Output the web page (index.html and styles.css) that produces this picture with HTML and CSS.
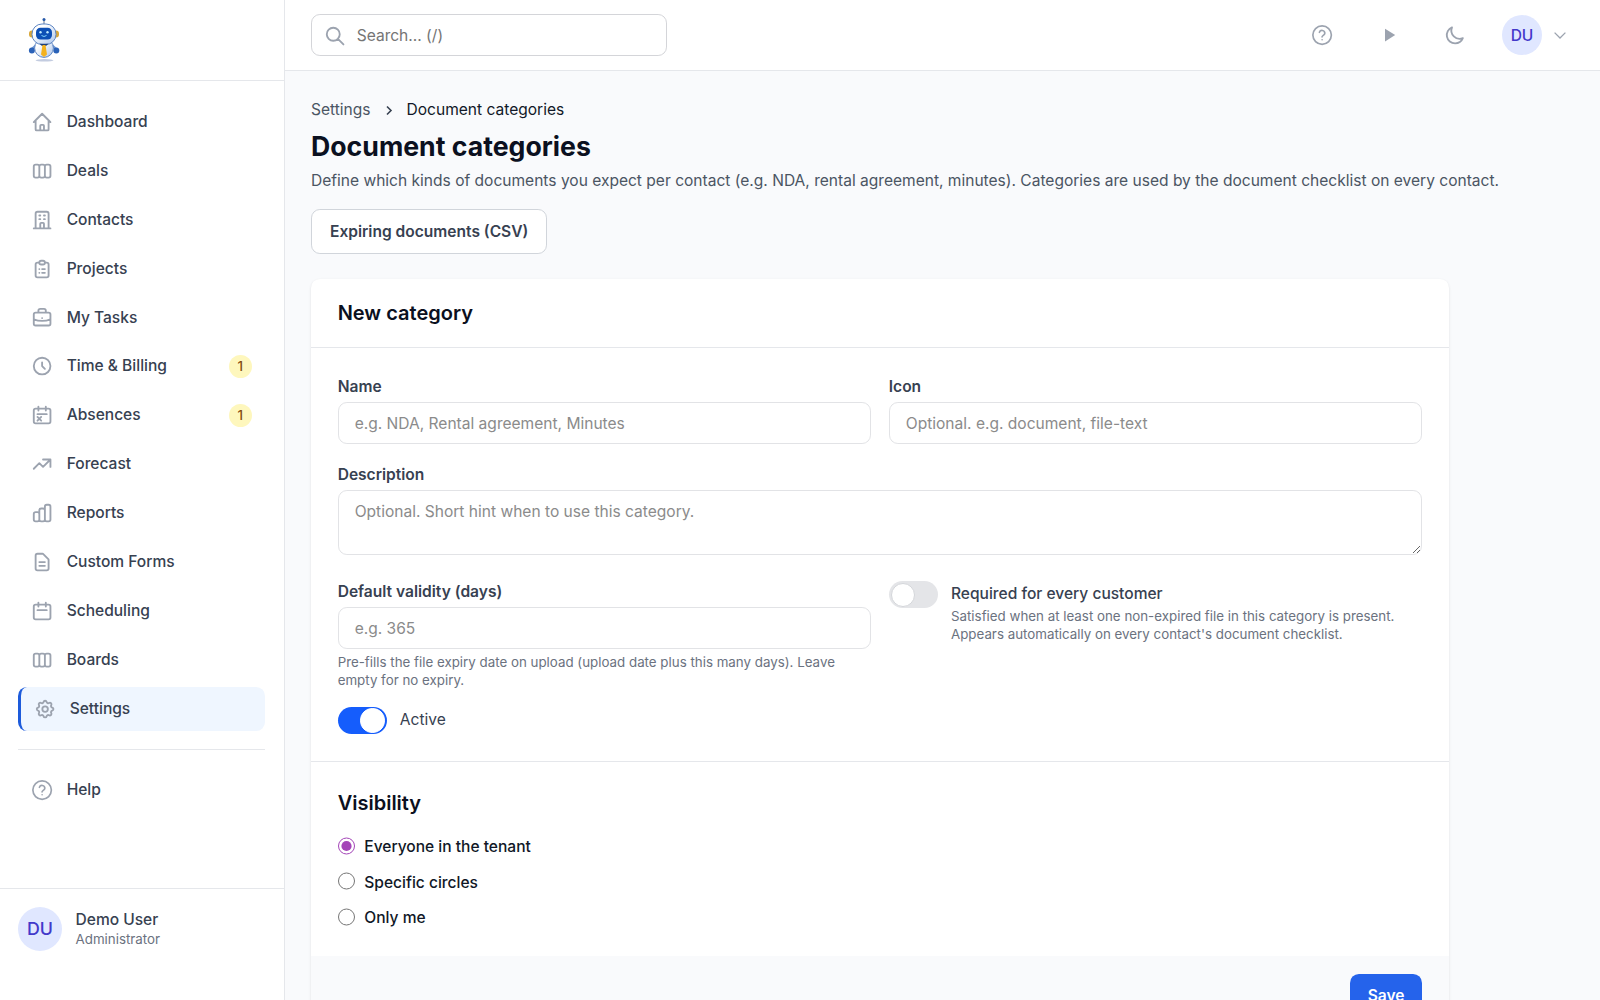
FILE: index.html
```html
<!DOCTYPE html>
<html lang="en">
<head>
    <meta charset="UTF-8">
    <meta name="viewport" content="width=device-width, initial-scale=1.0">
    <title>Document categories</title>
    <link rel="stylesheet" href="styles.css">
</head>
<body>
    <aside class="sidebar">
        <div class="logo">
            <svg viewBox="0 0 32 46" class="robot">
                <defs>
                    <linearGradient id="shell" x1="0" y1="0" x2="1" y2="1">
                        <stop offset="0.3" stop-color="#ffffff"/>
                        <stop offset="1" stop-color="#a9c3ea"/>
                    </linearGradient>
                </defs>
                <ellipse cx="16.500" cy="43.300" rx="9" ry="1.300" fill="#c3cce0"/>
                <path d="M16 7V3" stroke="#64748b" stroke-width="1"/>
                <circle cx="16" cy="2.500" r="1.500" fill="#2457a8"/>
                <rect x="1" y="13.500" width="6" height="7" rx="3" fill="#d9a83a"/>
                <rect x="25" y="13.500" width="6" height="7" rx="3" fill="#d9a83a"/>
                <path d="M8 28.500L4 32M24 28.500l4 3.500" stroke="#6f97d4" stroke-width="2.400"/>
                <circle cx="3.900" cy="33.500" r="3" fill="#2a62b8"/>
                <circle cx="28.300" cy="33.500" r="3" fill="#2a62b8"/>
                <circle cx="16" cy="31" r="9.400" fill="url(#shell)" stroke="#5f87c4" stroke-width="1"/>
                <rect x="4" y="7" width="24" height="20.500" rx="10" fill="url(#shell)" stroke="#5f87c4" stroke-width="1"/>
                <rect x="8" y="10.800" width="16" height="11.800" rx="4.500" fill="#0d4fb5"/>
                <circle cx="12.500" cy="15.300" r="1.200" fill="#bfeaff"/>
                <circle cx="19.500" cy="15.300" r="1.200" fill="#bfeaff"/>
                <path d="M13.500 18.500q2.500 2 5 0" stroke="#7fd4ff" fill="none"/>
                <path d="M11.500 26.800h9l-2.500 2.200h-4z" fill="#1d3f7c"/>
                <path d="M14.500 28h3l1.500 9.500-3 2.500-3-2.500z" fill="#f3b11d"/>
            </svg>
        </div>
        <nav class="nav">
            <a class="nav-item"><svg viewBox="0 0 24 24" class="icon"><path d="M3 12l2-2m0 0l7-7 7 7M5 10v10a1 1 0 001 1h3m10-11l2 2m-2-2v10a1 1 0 01-1 1h-3m-6 0a1 1 0 001-1v-4a1 1 0 011-1h2a1 1 0 011 1v4a1 1 0 001 1m-6 0h6"/></svg><span>Dashboard</span></a>
            <a class="nav-item"><svg viewBox="0 0 24 24" class="icon"><path d="M9 17V7m0 10a2 2 0 01-2 2H5a2 2 0 01-2-2V7a2 2 0 012-2h2a2 2 0 012 2m0 10a2 2 0 002 2h2a2 2 0 002-2M9 7a2 2 0 012-2h2a2 2 0 012 2m0 10V7m0 10a2 2 0 002 2h2a2 2 0 002-2V7a2 2 0 00-2-2h-2a2 2 0 00-2 2"/></svg><span>Deals</span></a>
            <a class="nav-item"><svg viewBox="0 0 24 24" class="icon"><path d="M19 21V5a2 2 0 00-2-2H7a2 2 0 00-2 2v16m14 0h2m-2 0h-5m-9 0H3m2 0h5M9 7h1m-1 4h1m4-4h1m-1 4h1m-5 10v-5a1 1 0 011-1h2a1 1 0 011 1v5m-4 0h4"/></svg><span>Contacts</span></a>
            <a class="nav-item"><svg viewBox="0 0 24 24" class="icon"><path d="M9 5H7a2 2 0 00-2 2v12a2 2 0 002 2h10a2 2 0 002-2V7a2 2 0 00-2-2h-2M9 5a2 2 0 002 2h2a2 2 0 002-2M9 5a2 2 0 012-2h2a2 2 0 012 2m-3 7h3m-3 4h3m-6-4h.01M9 16h.01"/></svg><span>Projects</span></a>
            <a class="nav-item"><svg viewBox="0 0 24 24" class="icon"><path d="M21 13.255A23.931 23.931 0 0112 15c-3.183 0-6.22-.62-9-1.745M16 6V4a2 2 0 00-2-2h-4a2 2 0 00-2 2v2m4 6h.01M5 20h14a2 2 0 002-2V8a2 2 0 00-2-2H5a2 2 0 00-2 2v10a2 2 0 002 2z"/></svg><span>My Tasks</span></a>
            <a class="nav-item"><svg viewBox="0 0 24 24" class="icon"><path d="M12 8v4l3 3m6-3a9 9 0 11-18 0 9 9 0 0118 0z"/></svg><span>Time &amp; Billing</span><span class="badge">1</span></a>
            <a class="nav-item"><svg viewBox="0 0 24 24" class="icon"><path d="M8 7V3m8 4V3m-9 8h10M5 21h14a2 2 0 002-2V7a2 2 0 00-2-2H5a2 2 0 00-2 2v12a2 2 0 002 2zM7 14l4 4m0-4l-4 4"/></svg><span>Absences</span><span class="badge">1</span></a>
            <a class="nav-item"><svg viewBox="0 0 24 24" class="icon"><path d="M13 7h8m0 0v8m0-8l-8 8-4-4-6 6"/></svg><span>Forecast</span></a>
            <a class="nav-item"><svg viewBox="0 0 24 24" class="icon"><path d="M9 19v-6a2 2 0 00-2-2H5a2 2 0 00-2 2v6a2 2 0 002 2h2a2 2 0 002-2zm0 0V9a2 2 0 012-2h2a2 2 0 012 2v10m-6 0a2 2 0 002 2h2a2 2 0 002-2m0 0V5a2 2 0 012-2h2a2 2 0 012 2v14a2 2 0 01-2 2h-2a2 2 0 01-2-2z"/></svg><span>Reports</span></a>
            <a class="nav-item"><svg viewBox="0 0 24 24" class="icon"><path d="M9 12h6m-6 4h6m2 5H7a2 2 0 01-2-2V5a2 2 0 012-2h5.586a1 1 0 01.707.293l5.414 5.414a1 1 0 01.293.707V19a2 2 0 01-2 2z"/></svg><span>Custom Forms</span></a>
            <a class="nav-item"><svg viewBox="0 0 24 24" class="icon"><path d="M8 7V3m8 4V3m-9 8h10M5 21h14a2 2 0 002-2V7a2 2 0 00-2-2H5a2 2 0 00-2 2v12a2 2 0 002 2z"/></svg><span>Scheduling</span></a>
            <a class="nav-item"><svg viewBox="0 0 24 24" class="icon"><path d="M9 17V7m0 10a2 2 0 01-2 2H5a2 2 0 01-2-2V7a2 2 0 012-2h2a2 2 0 012 2m0 10a2 2 0 002 2h2a2 2 0 002-2M9 7a2 2 0 012-2h2a2 2 0 012 2m0 10V7m0 10a2 2 0 002 2h2a2 2 0 002-2V7a2 2 0 00-2-2h-2a2 2 0 00-2 2"/></svg><span>Boards</span></a>
            <a class="nav-item active"><svg viewBox="0 0 24 24" class="icon"><path d="M10.325 4.317c.426-1.756 2.924-1.756 3.35 0a1.724 1.724 0 002.573 1.066c1.543-.94 3.31.826 2.37 2.37a1.724 1.724 0 001.065 2.572c1.756.426 1.756 2.924 0 3.35a1.724 1.724 0 00-1.066 2.573c.94 1.543-.826 3.31-2.37 2.37a1.724 1.724 0 00-2.572 1.065c-.426 1.756-2.924 1.756-3.35 0a1.724 1.724 0 00-2.573-1.066c-1.543.94-3.31-.826-2.37-2.37a1.724 1.724 0 00-1.065-2.572c-1.756-.426-1.756-2.924 0-3.35a1.724 1.724 0 001.066-2.573c-.94-1.543.826-3.31 2.37-2.37.996.608 2.296.07 2.572-1.065z"/><path d="M15 12a3 3 0 11-6 0 3 3 0 016 0z"/></svg><span>Settings</span></a>
            <hr class="nav-divider">
            <a class="nav-item"><svg viewBox="0 0 24 24" class="icon thin"><circle cx="12" cy="12" r="10"/><path d="M9.090 9a3 3 0 015.830 1c0 2-3 2.500-3 4M12 17h.01"/></svg><span>Help</span></a>
        </nav>
        <div class="user">
            <div class="avatar large">DU</div>
            <div>
                <div class="user-name">Demo User</div>
                <div class="user-role">Administrator</div>
            </div>
        </div>
    </aside>

    <div class="page">
        <header class="topbar">
            <label class="search">
                <svg viewBox="0 0 24 24" class="icon"><path d="M21 21l-6-6m2-5a7 7 0 11-14 0 7 7 0 0114 0z"/></svg>
                <input type="text" placeholder="Search... (/)">
            </label>
            <div class="actions">
                <svg viewBox="0 0 24 24" class="icon thin"><circle cx="12" cy="12" r="10"/><path d="M9.090 9a3 3 0 015.830 1c0 2-3 2.500-3 4M12 17h.01"/></svg>
                <svg viewBox="0 0 24 24" class="icon play"><path d="M6.500 5l11 7-11 7z"/></svg>
                <svg viewBox="0 0 24 24" class="icon moon"><path d="M20.354 15.354A9 9 0 018.646 3.646 9.003 9.003 0 0012 21a9.003 9.003 0 008.354-5.646z"/></svg>
                <div class="avatar">DU</div>
                <svg viewBox="0 0 12 7" class="chevron"><path d="M.6.600L6 6 11.400.6"/></svg>
            </div>
        </header>

        <main class="content">
            <div class="breadcrumb">
                <span class="parent">Settings</span>
                <svg viewBox="0 0 6 9" class="separator"><path d="M1 .5l4 4-4 4"/></svg>
                <span>Document categories</span>
            </div>
            <h1>Document categories</h1>
            <p class="intro">Define which kinds of documents you expect per contact (e.g. NDA, rental agreement, minutes). Categories are used by the document checklist on every contact.</p>
            <button class="btn btn-outline">Expiring documents (CSV)</button>

            <form class="card">
                <div class="card-header"><h2>New category</h2></div>
                <div class="card-body">
                    <div class="field">
                        <label for="name">Name</label>
                        <input id="name" type="text" placeholder="e.g. NDA, Rental agreement, Minutes">
                    </div>
                    <div class="field">
                        <label for="icon">Icon</label>
                        <input id="icon" type="text" placeholder="Optional. e.g. document, file-text">
                    </div>
                    <div class="field wide">
                        <label for="description">Description</label>
                        <textarea id="description" placeholder="Optional. Short hint when to use this category."></textarea>
                    </div>
                    <div class="field">
                        <label for="validity">Default validity (days)</label>
                        <input id="validity" type="text" placeholder="e.g. 365">
                        <p class="hint">Pre-fills the file expiry date on upload (upload date plus this many days). Leave empty for no expiry.</p>
                    </div>
                    <div class="toggle-row required">
                        <span class="toggle"></span>
                        <div>
                            <div class="toggle-title">Required for every customer</div>
                            <p class="hint">Satisfied when at least one non-expired file in this category is present. Appears automatically on every contact's document checklist.</p>
                        </div>
                    </div>
                    <div class="toggle-row wide centered">
                        <span class="toggle on"></span>
                        <span>Active</span>
                    </div>
                </div>
                <div class="card-section">
                    <h2>Visibility</h2>
                    <label class="radio"><input type="radio" name="visibility" checked><span>Everyone in the tenant</span></label>
                    <label class="radio"><input type="radio" name="visibility"><span>Specific circles</span></label>
                    <label class="radio"><input type="radio" name="visibility"><span>Only me</span></label>
                </div>
                <div class="card-footer">
                    <button type="button" class="btn btn-primary">Save</button>
                </div>
            </form>
        </main>
    </div>
</body>
</html>
```

FILE: styles.css
```css
* {
    box-sizing: border-box;
}
html {
    font-size: 17.778px;
}
body {
    margin: 0;
    height: 100vh;
    display: flex;
    overflow: hidden;
    font-family: Inter, "Liberation Sans", sans-serif;
    font-size: 0.875rem;
    line-height: 1.25rem;
    color: #111827;
    background-color: #f9fafc;
}
h1, h2, p {
    margin: 0;
}
input, textarea, button {
    font: inherit;
}
.icon {
    width: 1.25rem;
    height: 1.25rem;
    flex-shrink: 0;
    fill: none;
    stroke: #9ca3af;
    stroke-width: 2;
    stroke-linecap: round;
    stroke-linejoin: round;
}
.icon.thin {
    stroke-width: 1.8;
}

/* Sidebar */
.sidebar {
    width: 285px;
    flex-shrink: 0;
    display: flex;
    flex-direction: column;
    background-color: #fff;
    border-right: 1px solid #e5e7eb;
}
.logo {
    height: 81px;
    padding: 17px 0 0 28px;
    border-bottom: 1px solid #e5e7eb;
}
.robot {
    display: block;
    width: 32px;
    height: 46px;
}
.nav {
    flex: 1;
    display: flex;
    flex-direction: column;
    gap: 0.25rem;
    padding: 19px 19px 1rem 1rem;
}
.nav-item {
    display: flex;
    align-items: center;
    gap: 0.75rem;
    height: 2.5rem;
    padding: 0 0.75rem;
    border-radius: 0.5rem;
    font-weight: 500;
    color: #374151;
}
.nav-item.active {
    border-left: 3.5px solid #1d5bdb;
    background-color: #eff6ff;
}
.badge {
    margin-left: auto;
    padding: 0.125rem 0.48rem;
    border-radius: 1rem;
    font-size: 0.75rem;
    line-height: 1rem;
    color: #854d0e;
    background-color: #fef7bd;
}
.nav-divider {
    width: 100%;
    margin: 0.75rem 0;
    border: 0;
    border-top: 1px solid #e5e7eb;
}
.user {
    height: 112px;
    display: flex;
    align-items: flex-start;
    gap: 0.75rem;
    padding: 1rem;
    border-top: 1px solid #e5e7eb;
}
.user-name {
    margin-top: 2.5px;
    font-weight: 500;
    line-height: 1.25rem;
    color: #374151;
}
.user-role {
    font-size: 0.75rem;
    line-height: 1rem;
    color: #6b7280;
}
.avatar {
    width: 2.25rem;
    height: 2.25rem;
    display: flex;
    align-items: center;
    justify-content: center;
    padding-top: 1px;
    border-radius: 50%;
    font-weight: 500;
    color: #4338ca;
    background-color: #e0e7ff;
}
.avatar.large {
    width: 2.5rem;
    height: 2.5rem;
    font-size: 1rem;
}

/* Top bar */
.page {
    flex: 1;
    min-width: 0;
}
.topbar {
    height: 4rem;
    display: flex;
    align-items: center;
    justify-content: space-between;
    padding: 0.5px 34px 0 26px;
    background-color: #fff;
    border-bottom: 1px solid #e5e7eb;
}
.search {
    width: 20rem;
    height: 42px;
    display: flex;
    align-items: center;
    gap: 10.5px;
    padding: 1px 0.75rem 0 12px;
    border: 1px solid #d4d5d9;
    border-radius: 0.5rem;
}
.search input {
    flex: 1;
    min-width: 0;
    padding: 0.5px 0 0;
    border: 0;
    outline: 0;
}
.search input::placeholder {
    color: #757575;
}
.actions {
    display: flex;
    align-items: center;
}
.play {
    margin-left: 45px;
    fill: #9ca3af;
    stroke: none;
}
.moon {
    margin-left: 43px;
}
.actions .avatar {
    margin-left: 36px;
}
.chevron {
    width: 12px;
    height: 7px;
    margin-left: 12px;
    fill: none;
    stroke: #9ca3af;
    stroke-width: 1.3;
}

/* Content */
.content {
    padding: 28px 26px;
}
.breadcrumb {
    display: flex;
    align-items: center;
    gap: 15px;
}
.breadcrumb .parent {
    color: #4b5563;
}
.separator {
    width: 6px;
    height: 9px;
    fill: none;
    stroke: #374151;
    stroke-width: 1.6;
    overflow: visible;
}
h1 {
    margin-top: 8px;
    font-size: 1.5rem;
    line-height: 2rem;
    font-weight: 700;
    color: #0b1020;
}
.intro {
    margin-top: 5px;
    color: #4b5563;
    white-space: nowrap;
}
.btn {
    height: 2.5rem;
    padding: 0 1rem;
    border: 1px solid transparent;
    border-radius: 0.5rem;
    font-weight: 600;
}
.btn-outline {
    display: block;
    margin-top: 17px;
    padding: 1px 18px 0;
    color: #374151;
    background-color: #fff;
    border-color: #d1d5db;
}
.btn-primary {
    width: 72px;
    padding: 0;
    color: #fff;
    background-color: #2563eb;
}
.card {
    width: 64rem;
    margin-top: 25.7px;
    border-radius: 0.5rem;
    background-color: #fff;
    box-shadow: 0 1px 3px rgba(0, 0, 0, 0.1);
}
.card-header {
    height: 68.4px;
    display: flex;
    align-items: center;
    padding: 1.5px 1.5rem 0;
    border-bottom: 1px solid #e5e7eb;
}
h2 {
    font-size: 1.125rem;
    line-height: 1.75rem;
    font-weight: 600;
    color: #0b1020;
}
.card-body {
    display: grid;
    grid-template-columns: 1fr 1fr;
    gap: 1rem;
    padding: 1.5rem;
}
.wide {
    grid-column: span 2;
}
.field {
    display: flex;
    flex-direction: column;
}
.field label {
    margin: 2px 0 3.8px;
    font-weight: 600;
    color: #374151;
}
.field input, .field textarea {
    width: 100%;
    height: 42px;
    padding: 0 16px;
    border: 1px solid #e2e3e6;
    border-radius: 0.5rem;
    background-color: #fff;
}
.field textarea {
    height: 65px;
    margin-bottom: 6.5px;
    padding-top: 10px;
    resize: vertical;
}
.field input::placeholder, .field textarea::placeholder {
    color: #8b8b8b;
}
.hint {
    margin-top: 4.5px;
    font-size: 0.75rem;
    line-height: 1rem;
    color: #6b7280;
}
.toggle-row {
    display: flex;
    align-items: flex-start;
    gap: 0.75rem;
    color: #374151;
}
.toggle-row.required {
    padding-top: 2px;
}
.toggle-row.centered {
    align-items: center;
}
.toggle {
    width: 2.75rem;
    height: 1.5rem;
    flex-shrink: 0;
    display: flex;
    align-items: center;
    padding: 0 2px;
    border-radius: 1rem;
    background-color: #e4e5e8;
}
.toggle::after {
    content: "";
    width: 22.2px;
    height: 22.2px;
    border-radius: 50%;
    border: 1px solid #d4d6da;
    background-color: #fff;
}
.toggle.on {
    justify-content: flex-end;
    background-color: #155dfc;
}
.toggle.on::after {
    border-color: #fff;
}
.toggle-title {
    margin-top: 1.5px;
    font-weight: 500;
}
.toggle-title + .hint {
    margin-top: 3px;
}
.card-section {
    padding: 1.5rem 1.5rem 13.5px;
    border-top: 1px solid #e5e7eb;
}
.card-section h2 {
    margin-bottom: 16.5px;
}
.radio {
    display: flex;
    align-items: flex-start;
    gap: 0.5rem;
    height: 2rem;
    font-weight: 500;
}
.radio input {
    width: 1rem;
    height: 1rem;
    margin: 1px 0 0;
    accent-color: #a445b8;
}
.radio span {
    padding-top: 0.5px;
}
.card-footer {
    display: flex;
    justify-content: flex-end;
    padding: 1rem 1.5rem;
    background-color: #f9fafc;
}
```
